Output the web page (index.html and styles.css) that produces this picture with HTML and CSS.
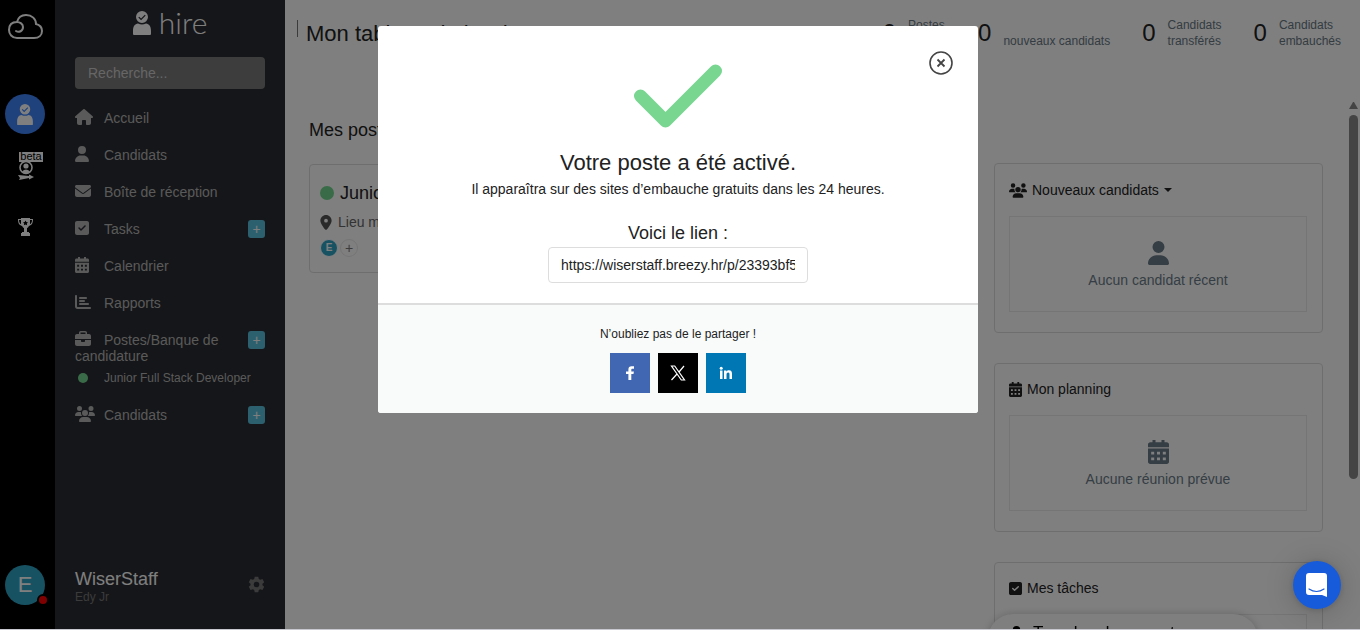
FILE: index.html
```html
<!DOCTYPE html>
<html lang="fr">
<head>
<meta charset="utf-8">
<meta name="viewport" content="width=device-width, initial-scale=1">
<title>Mon tableau de bord</title>
<link rel="stylesheet" href="styles.css">
</head>
<body>
<svg class="sprite" aria-hidden="true">
  <symbol id="user" viewBox="0 0 448 512"><path d="M224 256A128 128 0 1 0 224 0a128 128 0 1 0 0 256zm-45.700 48C79.800 304 0 383.800 0 482.300C0 498.700 13.300 512 29.700 512H418.300c16.400 0 29.700-13.300 29.700-29.700C448 383.800 368.200 304 269.700 304H178.300z"/></symbol>
  <symbol id="home" viewBox="0 0 576 512"><path d="M575.800 255.500c0 18-15 32.100-32 32.100h-32l.7 160.200c.2 36-28 64.200-64 64.200H384c-18 0-32-14-32-32V384c0-18-14-32-32-32h-64c-18 0-32 14-32 32v96c0 18-14 32-32 32h-64c-36 0-64-28-64-64V287.600H32c-18 0-32-14-32-32.100c0-9 3-17 10-24L266.400 8c7-7 15-8 22-8s15 2 21 7L564.800 231.500c8 7 12 15 11 24z"/></symbol>
  <symbol id="mail" viewBox="0 0 512 512"><path d="M48 64C21.500 64 0 85.500 0 112c0 15 7 29 19 38L237 314c11 9 27 9 38 0L493 150c12-9 19-23 19-38c0-26.500-21.500-48-48-48H48zM0 176V384c0 35 29 64 64 64H448c35 0 64-29 64-64V176L294 339c-23 17-53 17-76 0L0 176z"/></symbol>
  <symbol id="check" viewBox="0 0 448 512"><path fill-rule="evenodd" d="M64 32C29 32 0 61 0 96V416c0 35 29 64 64 64H384c35 0 64-29 64-64V96c0-35-29-64-64-64H64zM337 209L209 337c-9 9-25 9-34 0l-64-64c-22-23 11-57 34-34l47 47L303 175c23-22 57 11 34 34z"/></symbol>
  <symbol id="calendar" viewBox="0 0 448 512"><path fill-rule="evenodd" d="M96 0h64v48h128V0h64v48h48c27 0 48 21 48 48v56H0V96c0-27 21-48 48-48h48zM0 180H448V464c0 27-21 48-48 48H48c-27 0-48-21-48-48V180zM68 250v60h64v-60H68zm124 0v60h64v-60h-64zm124 0v60h64v-60h-64zM68 374v60h64v-60H68zm124 0v60h64v-60h-64zm124 0v60h64v-60h-64z"/></symbol>
  <symbol id="chart" viewBox="0 0 512 512"><path d="M32 32c18 0 32 14 32 32V400c0 9 7 16 16 16H480c42 0 42 64 0 64H80c-44 0-80-36-80-80V64c0-18 14-32 32-32zM160 96H352c42 0 42 64 0 64H160c-42 0-42-64 0-64zm0 96H288c42 0 42 64 0 64H160c-42 0-42-64 0-64zm0 96H416c42 0 42 64 0 64H160c-42 0-42-64 0-64z"/></symbol>
  <symbol id="case" viewBox="0 0 512 512"><path fill-rule="evenodd" d="M184 48H328c4 0 8 4 8 8V96H176V56c0-4 4-8 8-8zM128 56V96H64C29 96 0 125 0 160v96H512V160c0-35-29-64-64-64H384V56c0-31-25-56-56-56H184c-31 0-56 25-56 56zM512 288H320v32c0 18-14 32-32 32H224c-18 0-32-14-32-32V288H0V416c0 35 29 64 64 64H448c35 0 64-29 64-64V288z"/></symbol>
  <symbol id="group" viewBox="0 0 640 512"><path d="M144 0a80 80 0 1 1 0 160A80 80 0 1 1 144 0zM512 0a80 80 0 1 1 0 160A80 80 0 1 1 512 0zM0 298.700C0 239.800 47.800 192 106.700 192h42.700c15.900 0 31 3.500 44.600 9.700c-1.300 7.200-1.900 14.700-1.900 22.300c0 38.200 16.800 72.500 43.300 96H21.300C9.600 320 0 310.400 0 298.700zM405.300 320h-.7c26.600-23.500 43.300-57.800 43.300-96c0-7.600-.7-15-1.900-22.300c13.600-6.300 28.700-9.700 44.600-9.700h42.700C592.200 192 640 239.800 640 298.700c0 11.800-9.600 21.300-21.300 21.300H405.300zM224 224a96 96 0 1 1 192 0a96 96 0 1 1-192 0zM128 485.300C128 411.700 187.700 352 261.300 352H378.700C452.300 352 512 411.700 512 485.300c0 14.700-11.900 26.700-26.700 26.700H154.700c-14.700 0-26.700-11.900-26.700-26.700z"/></symbol>
  <symbol id="gear" viewBox="0 0 24 24"><path fill-rule="evenodd" d="M9.500 1h5l.7 3.200 2 1.200 3.200-1 2.500 4.300-2.500 2.200v2.200l2.500 2.200-2.500 4.300-3.200-1-2 1.200-.7 3.200h-5l-.7-3.200-2-1.200-3.200 1-2.500-4.300 2.500-2.200v-2.200L1.100 8.700l2.500-4.300 3.200 1 2-1.200zM12 8a4 4 0 1 0 0 8a4 4 0 1 0 0-8z"/></symbol>
  <symbol id="pin" viewBox="0 0 384 512"><path fill-rule="evenodd" d="M216 499C267 435 384 279 384 192C384 86 298 0 192 0S0 86 0 192c0 87 117 243 168 307c12 15 36 15 48 0zM192 128a64 64 0 1 1 0 128a64 64 0 1 1 0-128z"/></symbol>
  <symbol id="hired" viewBox="0 0 18 24"><path fill-rule="evenodd" d="M9 0a6 6 0 0 1 6 6a6 6 0 0 1-12 0a6 6 0 0 1 6-6zM6.200 5.700l-.9.900 2.800 2.700 4.600-4.700-.9-.9-3.700 3.800zM0 23V20C0 15 2 13 5 12.500q4 2 8 0C16 13 18 15 18 20v3q0 1-1 1H1q-1 0-1-1z"/></symbol>
</svg>

<div class="app">
  <nav class="rail" aria-label="Applications">
    <a class="rail-logo" href="#" aria-label="Accueil général">
      <svg width="36" height="26" viewBox="0 0 36 26" fill="none" stroke="currentColor" stroke-width="2" stroke-linecap="round"><path d="M9 18c3 2 7 0 7-4 0-3-3-5-6-5-5 0-8 3-8 8 0 4 3 8 8 8h17c5 0 8-3 8-7 0-3-2-6-6-7C29 6 25 2 19 2c-5 0-8 3-9 7"/></svg>
    </a>
    <a class="rail-app" href="#" aria-label="Hire"><svg width="16" height="21"><use href="#hired"/></svg></a>
    <a class="rail-beta" href="#"><span class="beta">beta</span>
      <svg width="16" height="18" viewBox="0 0 16 18"><circle cx="8" cy="5.500" r="6" fill="none" stroke="currentColor" stroke-width="1.600"/><circle cx="8" cy="4" r="2.600" fill="currentColor"/><path fill="currentColor" d="M4 9.500q4-4 8 0l-2 2H6zM0 13l11 1v-1.500l5 2.500-5 2.500V16L1 18l1-2z"/></svg>
    </a>
    <a class="rail-cup" href="#" aria-label="Trophées">
      <svg width="15" height="18" viewBox="0 0 15 18"><path fill="currentColor" fill-rule="evenodd" d="M3 0h9v1h3c0 4-1 6-4 7-1 1-1 2-2 2v4h2v1h1v3H3v-3h1v-1h2v-4C5 10 5 9 4 8 1 7 0 5 0 1h3zM1 2c0 2 1 4 2 4V2zm11 0v4c1 0 2-2 2-4zM7.500 2.500l-.8 1.600-1.700.3L6.200 5.600l-.3 1.700 1.600-.8 1.600.8-.3-1.700L10 4.400l-1.700-.3z"/></svg>
    </a>
    <a class="rail-user" href="#">E<span class="status"></span></a>
  </nav>

  <aside class="sidebar">
    <a class="brand" href="#"><svg width="18" height="24"><use href="#hired"/></svg><span>hire</span></a>
    <input class="search" type="search" placeholder="Recherche..." aria-label="Recherche">
    <ul class="menu">
      <li><a href="#"><svg class="mi"><use href="#home"/></svg>Accueil</a></li>
      <li><a href="#"><svg class="mi narrow"><use href="#user"/></svg>Candidats</a></li>
      <li><a href="#"><svg class="mi mid"><use href="#mail"/></svg>Boîte de réception</a></li>
      <li><a href="#"><svg class="mi narrow"><use href="#check"/></svg>Tasks</a><button class="add" aria-label="Ajouter une tâche">+</button></li>
      <li><a href="#"><svg class="mi narrow"><use href="#calendar"/></svg>Calendrier</a></li>
      <li><a href="#"><svg class="mi mid"><use href="#chart"/></svg>Rapports</a></li>
      <li><a href="#"><svg class="mi mid"><use href="#case"/></svg>Postes/Banque de candidature</a><button class="add" aria-label="Ajouter un poste">+</button>
        <a class="sub" href="#"><span class="dot"></span>Junior Full Stack Developer</a></li>
      <li><a href="#"><svg class="mi wide"><use href="#group"/></svg>Candidats</a><button class="add" aria-label="Ajouter un candidat">+</button></li>
    </ul>
    <div class="account">
      <div><strong>WiserStaff</strong><small>Edy Jr</small></div>
      <button aria-label="Paramètres"><svg width="17" height="17"><use href="#gear"/></svg></button>
    </div>
  </aside>

  <main class="main">
    <header class="top">
      <h1>Mon tableau de bord</h1>
      <ul class="stats">
        <li><b>0</b><span>Postes<br>publiés</span></li>
        <li><b>0</b><span><br>nouveaux candidats</span></li>
        <li><b>0</b><span>Candidats<br>transférés</span></li>
        <li><b>0</b><span>Candidats<br>embauchés</span></li>
      </ul>
    </header>
    <div class="scroller">
      <div class="content">
        <section class="jobs">
          <h2>Mes postes</h2>
          <article class="job">
            <h3><span class="dot"></span>Junior Full Stack Developer</h3>
            <p><svg width="12" height="15"><use href="#pin"/></svg>Lieu multiple</p>
            <div class="team"><span class="face">E</span><button aria-label="Ajouter un membre">+</button></div>
          </article>
        </section>
        <section class="widgets">
          <article class="widget">
            <button class="picker"><svg width="18" height="15"><use href="#group"/></svg>Nouveaux candidats<i class="caret"></i></button>
            <div class="empty"><svg width="21" height="24"><use href="#user"/></svg>Aucun candidat récent</div>
          </article>
          <article class="widget">
            <h3><svg width="13" height="15"><use href="#calendar"/></svg>Mon planning</h3>
            <div class="empty"><svg width="21" height="24"><use href="#calendar"/></svg>Aucune réunion prévue</div>
          </article>
          <article class="widget">
            <h3><svg width="13" height="15"><use href="#check"/></svg>Mes tâches</h3>
            <div class="empty"></div>
          </article>
        </section>
      </div>
      <div class="bar" aria-hidden="true"><i class="up"></i><i class="thumb"></i></div>
    </div>
  </main>
</div>

<aside class="toast"><svg width="13" height="15"><use href="#user"/></svg>Tous les documents</aside>

<div class="overlay">
  <div class="modal" role="dialog" aria-modal="true" aria-labelledby="done">
    <button class="close" aria-label="Fermer"><svg width="24" height="24" viewBox="0 0 24 24" fill="none" stroke="currentColor"><circle cx="12" cy="12" r="11" stroke-width="1.600"/><path d="M8.500 8.500l7 7M15.500 8.500l-7 7" stroke-width="1.800"/></svg></button>
    <div class="modal-body">
      <svg class="tick" width="90" height="64" viewBox="0 0 90 64" fill="none" stroke="currentColor" stroke-width="13" stroke-linecap="round" stroke-linejoin="round"><path d="M7.500 32L32.500 57 82.500 7"/></svg>
      <h2 id="done">Votre poste a été activé.</h2>
      <p>Il apparaîtra sur des sites d’embauche gratuits dans les 24 heures.</p>
      <label for="link">Voici le lien :</label>
      <input id="link" type="text" readonly value="https://wiserstaff.breezy.hr/p/23393bf5-junior-full-stack-developer">
    </div>
    <div class="modal-foot">
      <p>N’oubliez pas de le partager !</p>
      <div class="share">
        <a class="fb" href="#" aria-label="Facebook"><svg width="16" height="16" viewBox="0 0 16 16" fill="currentColor"><path d="M6.400 15V9H4V6.500h2.400V4.500C6.400 2.200 7.600 1.200 9.500 1.200H12v2.500h-1.500c-1 0-1.200.4-1.200 1.200v1.600h2.600L11.500 9H9.300v6z"/></svg></a>
        <a class="tw" href="#" aria-label="X"><svg width="16" height="16" viewBox="0 0 16 16" fill="none" stroke="currentColor" stroke-width="1.200"><path d="M1.500 1h3.200l9.800 14h-3.200zM14 1L9 7M7 9L1.500 15"/></svg></a>
        <a class="li" href="#" aria-label="LinkedIn"><svg width="16" height="16" viewBox="0 0 16 16" fill="currentColor"><circle cx="3.200" cy="3.200" r="1.500"/><path d="M2 5.500h2.500V14H2zM6 5.500h2.400v1.200C9 5.800 9.800 5.300 11 5.300c2.400 0 3 1.500 3 3.700v5h-2.500V9.500c0-1.200-.2-2-1.300-2S8.500 8.300 8.500 9.500V14H6z"/></svg></a>
      </div>
    </div>
  </div>
</div>

<button class="chat" aria-label="Ouvrir la messagerie"><svg width="24" height="26" viewBox="0 0 24 26"><path fill="#fff" d="M4 1h15q3 0 3 3v21l-5-2H4q-3 0-3-3V4q0-3 3-3z"/><path fill="none" stroke="#175bdb" stroke-width="1.200" stroke-linecap="round" d="M4 17q7.500 5 15 0"/></svg></button>
</body>
</html>
```
FILE: styles.css
```css
* { box-sizing: border-box; }
html, body { height: 100%; }
body {
  margin: 0;
  background: #fff;
  color: #222;
  font: 14px/16px "Liberation Sans", Arial, sans-serif;
  overflow: hidden;
}
h1, h2, h3, p, ul { margin: 0; padding: 0; font-weight: 400; }
ul { list-style: none; }
a { color: inherit; text-decoration: none; }
button { font: inherit; color: inherit; border: 0; background: none; padding: 0; }
svg { fill: currentColor; flex: none; }
svg[fill="none"] { fill: none; }
.sprite { display: none; }

.app { display: flex; height: 100vh; }

.rail {
  width: 55px;
  padding: 13px 5px 25px;
  display: flex;
  flex-direction: column;
  background: #000;
  color: #fff;
}
.rail-logo { padding-left: 2px; height: 81px; }
.rail-app, .rail-user {
  width: 40px;
  height: 40px;
  border-radius: 50%;
  display: flex;
  align-items: center;
  justify-content: center;
}
.rail-app { background: #3f83f8; }
.rail-beta {
  display: flex;
  flex-direction: column;
  margin: 18px 0 0 13px;
}
.beta {
  width: 24px;
  height: 10px;
  margin-left: 1px;
  background: #fff;
  color: #000;
  font-size: 11px;
  line-height: 9px;
  text-align: center;
}
.rail-cup { margin: 38px 0 0 13px; }
.rail-user {
  position: relative;
  margin-top: auto;
  background: #2fa4c7;
  font-size: 22px;
}
.status {
  position: absolute;
  right: -4px;
  bottom: -1px;
  width: 12px;
  height: 12px;
  border: 2px solid #000;
  border-radius: 50%;
  background: #f00;
}

.sidebar {
  width: 230px;
  padding: 8px 20px 26px;
  display: flex;
  flex-direction: column;
  background: #2b2d33;
  color: #b4b4b4;
}
.brand {
  display: flex;
  align-items: center;
  justify-content: center;
  gap: 8px;
  height: 29px;
  margin-bottom: 20px;
  color: #fff;
  font: 300 30px/29px Lato, sans-serif;
}
.search {
  width: 100%;
  height: 32px;
  margin-bottom: 21px;
  padding: 0 13px;
  border: 0;
  border-radius: 4px;
  background: #7a7a7a;
  color: #fff;
  font: inherit;
}
.search::placeholder { color: #ccc; }
.menu li {
  display: grid;
  grid-template-columns: 1fr auto;
  align-items: start;
  margin-bottom: 21px;
}
.mi {
  width: 18px;
  height: 16px;
  margin: -2px 11px 0 0;
  vertical-align: -2px;
}
.mi.narrow { width: 14px; margin-right: 15px; }
.mi.mid { width: 16px; margin-right: 13px; }
.mi.wide { width: 20px; margin-right: 9px; }
.add {
  width: 17px;
  height: 18px;
  margin: -1px 0;
  border-radius: 3px;
  background: #5bc0de;
  color: #fff;
  line-height: 16px;
}
.sub {
  grid-column: 1 / -1;
  display: flex;
  align-items: center;
  margin-top: 6px;
  font-size: 12px;
}
.dot {
  width: 14px;
  height: 14px;
  border-radius: 50%;
  background: #75d790;
}
.sub .dot { width: 10px; height: 10px; margin: 0 16px 0 3px; }
.account {
  display: flex;
  align-items: center;
  justify-content: space-between;
  margin-top: auto;
  color: #777;
}
.account strong { display: block; color: #fff; font-size: 18px; line-height: 22px; font-weight: 400; }
.account small { display: block; font-size: 12px; line-height: 14px; }

.main { flex: 1; min-width: 0; display: flex; flex-direction: column; background: #fff; }
.top {
  display: flex;
  justify-content: space-between;
  align-items: flex-start;
  height: 99px;
  padding: 17px 19px 0 12px;
}
.top h1 { font-size: 22px; line-height: 34px; }
.top h1::before {
  content: "";
  display: inline-block;
  width: 1px;
  height: 17px;
  margin-right: 8px;
  background: #777;
  vertical-align: 4px;
}
.stats { display: flex; gap: 32px; color: #687884; font-size: 12px; }
.stats li { display: flex; align-items: center; gap: 12px; }
.stats b { color: #222; font-size: 24px; font-weight: 400; }
.scroller { flex: 1; min-height: 0; display: flex; overflow: hidden; }
.content {
  flex: 1;
  display: grid;
  grid-template-columns: 1fr 329px;
  gap: 30px;
  padding: 0 26px 0 24px;
}
.jobs h2 { padding: 20px 0 23px; font-size: 18px; line-height: 22px; }
.job { border: 1px solid #ddd; border-radius: 4px; padding: 17px 10px 15px; }
.job h3, .job p, .team { display: flex; align-items: center; gap: 6px; }
.job h3 { font-size: 18px; line-height: 22px; }
.job p { margin: 10px 0 9px; color: #666; }
.job p svg { color: #555; }
.team { gap: 2px; }
.face, .team button { width: 18px; height: 18px; border-radius: 50%; text-align: center; line-height: 16px; }
.face { background: #2fa4c7; color: #fff; border: 1px solid #fff; font-size: 10px; font-weight: 700; }
.team button { border: 1px solid #eaeaea; color: #777; }
.widgets { display: flex; flex-direction: column; gap: 30px; padding-top: 64px; }
.widget { border: 1px solid #ddd; border-radius: 4px; padding: 16px 15px 20px 14px; }
.widget h3, .picker { display: flex; align-items: center; gap: 5px; margin-bottom: 16px; font-size: 14px; line-height: 19px; }
.picker { line-height: 20px; }
.caret { border: 4px solid transparent; border-top-color: currentColor; border-bottom: 0; }
.empty {
  display: flex;
  flex-direction: column;
  align-items: center;
  gap: 7px;
  min-height: 96px;
  padding: 24px 10px 23px;
  border: 1px solid #eaeaea;
  color: #6b7c89;
}
.bar { width: 11px; display: flex; flex-direction: column; gap: 6px; padding-top: 3px; }
.up { width: 9px; border: 4px solid transparent; border-bottom: 7px solid #888; border-top: 0; }
.thumb { width: 9px; height: 69%; border-radius: 5px; background: #888; }

.toast {
  position: fixed;
  right: 102px;
  bottom: -34px;
  display: flex;
  align-items: center;
  gap: 10px;
  width: 270px;
  height: 50px;
  padding: 0 22px 12px;
  border-radius: 25px;
  background: #fff;
  box-shadow: 0 0 8px rgba(0, 0, 0, .2);
  color: #000;
  font-size: 17px;
}
.overlay {
  position: fixed;
  inset: 0;
  padding: 26px 4px 0 0;
  display: flex;
  justify-content: center;
  align-items: flex-start;
  border-bottom: 1px solid #c8c8d0;
  background: rgba(0, 0, 0, .5);
}
.modal {
  position: relative;
  width: 600px;
  max-width: 100%;
  border-radius: 3px;
  overflow: hidden;
  background: #fff;
  text-align: center;
}
.close { position: absolute; top: 25px; right: 25px; height: 24px; color: #444; }
.modal-body {
  display: flex;
  flex-direction: column;
  align-items: center;
  padding: 38px 20px 20px;
}
.tick { color: #78d691; }
.modal-body h2 { margin: 22px 0 1px; font-size: 22px; line-height: 26px; }
.modal-body p { line-height: 24px; margin-bottom: 21px; }
.modal-body label { margin-bottom: 3px; font-size: 18px; line-height: 22px; }
.modal-body input {
  width: 260px;
  height: 36px;
  padding: 0 12px;
  border: 1px solid #ddd;
  border-radius: 4px;
  background: #fff;
  color: #222;
  font: inherit;
}
.modal-foot { padding: 20px; border-top: 2px solid #ddd; background: #f9fbfb; font-size: 12px; }
.modal-foot p { line-height: 18px; margin-bottom: 10px; }
.share { display: flex; justify-content: center; gap: 8px; }
.share a { width: 40px; height: 40px; display: flex; align-items: center; justify-content: center; color: #fff; }
.fb { background: #4267b2; }
.tw { background: #000; }
.li { background: #0077b5; }
.chat {
  position: fixed;
  right: 19px;
  bottom: 21px;
  width: 48px;
  height: 48px;
  display: flex;
  align-items: center;
  justify-content: center;
  border-radius: 50%;
  background: #175bdb;
  box-shadow: 0 1px 6px rgba(0, 0, 0, .15), 0 2px 30px rgba(0, 0, 0, .2);
}
```
